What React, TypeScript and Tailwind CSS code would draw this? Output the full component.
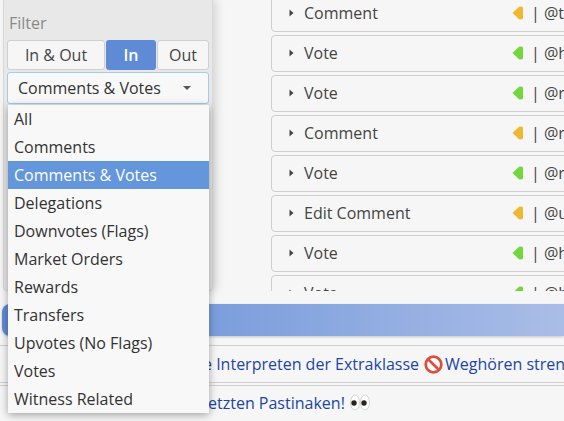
import React from "react";

const rows = [
  { label: "Comment", color: "#f0b733", user: "@t" },
  { label: "Vote", color: "#72d63c", user: "@h" },
  { label: "Vote", color: "#72d63c", user: "@r" },
  { label: "Comment", color: "#f0b733", user: "@r" },
  { label: "Vote", color: "#72d63c", user: "@r" },
  { label: "Edit Comment", color: "#f0b733", user: "@u" },
  { label: "Vote", color: "#72d63c", user: "@h" },
  { label: "Vote", color: "#72d63c", user: "@h" },
];

const options = [
  "All",
  "Comments",
  "Comments & Votes",
  "Delegations",
  "Downvotes (Flags)",
  "Market Orders",
  "Rewards",
  "Transfers",
  "Upvotes (No Flags)",
  "Votes",
  "Witness Related",
];

function Row({ label, color, user }: { label: string; color: string; user: string }) {
  return (
    <div className="flex h-[37px] shrink-0 items-center rounded-[4px] border border-[#cfcfcf] bg-[#f6f6f6] pb-[2px] text-[16px] text-[#444]">
      <svg width="5" height="8" viewBox="0 0 5 8" className="ml-[17px] shrink-0">
        <path d="M0.5 0.5 L4.5 4 L0.5 7.5 Z" fill="#444" />
      </svg>
      <span className="ml-[10px] w-[208px] shrink-0">{label}</span>
      <svg width="11" height="14" viewBox="0 0 11 14" className="shrink-0">
        <path d="M0.5 7 L7 0.7 Q11 0 11 2 L11 12 Q11 14 7 13.3 Z" fill={color} />
      </svg>
      <span className="ml-[8px] whitespace-nowrap">| {user}</span>
    </div>
  );
}

export default function App() {
  return (
    <div className="relative h-[421px] w-[564px] overflow-hidden bg-[#f6f6f6] font-['Open_Sans',sans-serif]">
      <div className="flex h-[291px]">
        {/* Filter panel */}
        <div className="ml-[3px] h-[291px] w-[210px] shrink-0 rounded-b-[4px] border-x border-b border-[#d8d8d8] bg-[#e8e8e8] px-[3px] pt-[13px] shadow-[4px_0_8px_rgba(0,0,0,0.12)]">
          <div className="pl-[2px] text-[16px] leading-[20px] text-[#8a8a8a]">Filter</div>
          <div className="mt-[7px] flex h-[30px] gap-[1px] text-[16px] text-[#444]">
            <div className="flex w-[98px] items-center justify-center rounded-[3px] border border-[#cfcfcf] bg-[#f6f6f6]">
              In &amp; Out
            </div>
            <div className="flex w-[50px] items-center justify-center rounded-[3px] bg-[#5f8bd6] font-semibold text-white">
              In
            </div>
            <div className="flex w-[52px] items-center justify-center rounded-[3px] border border-[#cfcfcf] bg-[#f6f6f6]">
              Out
            </div>
          </div>
          <div className="mt-[2px] flex h-[32px] w-[202px] items-center justify-between rounded-[3px] border border-[#a9c8ea] bg-[#f8f8f8] pr-[17px] pl-[10px] text-[16px] text-[#333]">
            <span>Comments &amp; Votes</span>
            <span className="h-0 w-0 border-x-[4px] border-t-[4px] border-x-transparent border-t-[#555]" />
          </div>
        </div>

        {/* Activity rows */}
        <div className="ml-[58px] flex h-[291px] w-[320px] shrink-0 flex-col gap-[3px] overflow-hidden pt-0">
          <div className="-mt-[5px] flex flex-col gap-[3px]">
            {rows.map((r, i) => (
              <Row key={i} {...r} />
            ))}
          </div>
        </div>
      </div>

      <div className="mt-[13px] ml-[2px] h-[32px] rounded-l-[8px] bg-gradient-to-r from-[#5f8bd6] to-[#aabde6] shadow-[0_1px_3px_rgba(0,0,0,0.2)]" />

      <div className="mt-[9px] flex h-[38px] items-center overflow-hidden border-y border-[#cfcfcf] pl-[203px] text-[16px] whitespace-nowrap text-[#1c45a6]">
        <span>e Interpreten der Extraklasse</span>
        <svg width="19" height="19" viewBox="0 0 18 18" className="ml-[5px] shrink-0">
          <circle cx="9" cy="9" r="7.4" fill="#fff" stroke="#d9503f" strokeWidth="2.6" />
          <path d="M4 4 L14 14" stroke="#d9503f" strokeWidth="2.6" />
        </svg>
        <span className="ml-[2px]">Weghören streng</span>
      </div>
      <div className="mt-[2px] flex h-[36px] items-center gap-[5px] border-t border-[#cfcfcf] pb-[2px] pl-[208px] text-[16px] whitespace-nowrap text-[#1c45a6]">
        <span>etzten Pastinaken!</span>
        <svg width="20" height="17" viewBox="0 0 20 16" className="shrink-0">
          <ellipse cx="5" cy="8" rx="4.5" ry="7.5" fill="#fff" stroke="#bbb" strokeWidth="0.6" />
          <ellipse cx="15" cy="8" rx="4.5" ry="7.5" fill="#fff" stroke="#bbb" strokeWidth="0.6" />
          <circle cx="4" cy="8.5" r="2.7" fill="#2a2118" />
          <circle cx="14" cy="8.5" r="2.7" fill="#2a2118" />
        </svg>
      </div>

      {/* Open select menu */}
      <div className="absolute top-[105px] left-[8px] w-[201px] bg-[#f8f8f8] py-0 text-[16px] text-[#333] shadow-[0_2px_8px_rgba(0,0,0,0.35)]">
        {options.map((o) => (
          <div
            key={o}
            className={
              o === "Comments & Votes"
                ? "flex h-[28px] items-center bg-[#6496db] px-[6px] text-white"
                : "flex h-[28px] items-center px-[6px]"
            }
          >
            {o}
          </div>
        ))}
      </div>
    </div>
  );
}
